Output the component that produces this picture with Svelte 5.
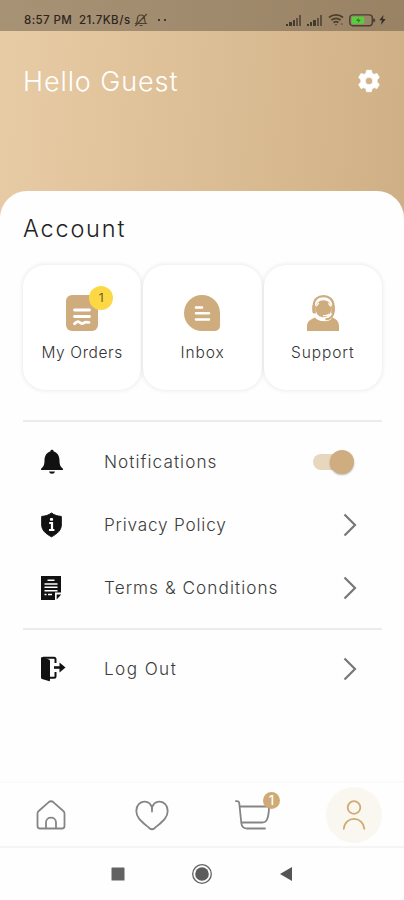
<script>
  let notifications = $state(true);
  const bars = [2, 4, 6, 8, 11];
</script>

<div class="app">
  <header>
    <div class="status">
      <span class="time">8:57 PM</span>
      <span class="speed">21.7KB/s</span>
      <svg class="mute" width="14" height="14" viewBox="0 0 14 14" fill="none" stroke="#4d4030" stroke-width="1.2">
        <path d="M2 10.5h10c-1.3-1-1.4-2.500-1.400-4.500C10.600 3.500 9 2 7 2S3.400 3.500 3.400 6c0 2-.1 3.500-1.400 4.500ZM5.500 12.500h3M12.800 1 1.200 13" />
      </svg>
      <span class="dots"><i></i><i></i></span>
      <span class="grow"></span>
      {#each [0, 1] as n (n)}
        <span class="signal">
          {#each bars as h, i (h)}<i class:dim={i > 2} style="height:{h}px"></i>{/each}
        </span>
      {/each}
      <svg class="wifi" width="16" height="14" viewBox="0 0 16 14" fill="none" stroke="#4a3e30" stroke-width="1.700">
        <path d="M1 4.500C5 .9 11 .9 15 4.500M3.300 7.200c2.700-2.400 6.700-2.400 9.400 0M5.500 9.700c1.500-1.300 3.500-1.300 5 0" />
        <path d="M6.800 11.200h2.400L8 12.700Z" fill="#4a3e30" stroke="none" />
        <path d="M13 11h1.500" stroke-width="1.200" />
      </svg>
      <svg width="27" height="13" viewBox="0 0 27 13">
        <rect x=".8" y=".9" width="22.500" height="10.800" rx="3" fill="none" stroke="#493d31" stroke-width="1.400" />
        <rect x="2.700" y="2.800" width="12.500" height="7" rx="1" fill="#55cf3c" />
        <path d="M24.200 4.200q2 0 2 2.100t-2 2.100Z" fill="#493d31" />
        <path d="M9.700 3.500 7 6.700h2.400l-.6 2.600 3-3.500H9.400Z" fill="#39702c" />
      </svg>
      <svg class="bolt" width="7" height="10" viewBox="0 0 7 10"><path d="M4.500 0 .3 5.300h2.500L2 10l4.700-6H4Z" fill="#3b3025" /></svg>
    </div>
    <div class="hello">
      <h1>Hello Guest</h1>
      <svg width="24" height="24" viewBox="0 0 24 24" fill="#fff" aria-label="Settings">
        <path fill-rule="evenodd" d="M9.600 1.300h4.800l.7 3 1.900 1.100 3-.9 2.300 4-2.200 2.200v2.600l2.200 2.200-2.300 4-3-.9-1.900 1.100-.7 3H9.600l-.7-3L7 18.600l-3 .9-2.300-4 2.200-2.200v-2.600L1.700 8.500l2.300-4 3 .9 1.900-1.100ZM12 8.200a3.800 3.800 0 1 0 0 7.600 3.800 3.800 0 0 0 0-7.600Z" stroke="#fff" stroke-linejoin="round" stroke-width=".8" />
      </svg>
    </div>
  </header>

  <main>
    <h2>Account</h2>
    <div class="cards">
      <button class="card">
        <span class="pic">
          <svg width="32" height="36" viewBox="0 0 32 36">
            <rect width="32" height="36" rx="6" fill="#cfac7e" />
            <path d="M8.500 15h15M8.500 21.500h15M8.500 28.800c2.700-3 4.300-2.500 5.700-1s3 .5 4.300-.2 2.700-.3 4.500-.2" fill="none" stroke="#fff" stroke-width="2.800" stroke-linecap="round" />
          </svg>
          <b class="count">1</b>
        </span>
        <span class="label orders">My Orders</span>
      </button>
      <button class="card">
        <span class="pic">
          <svg width="36" height="36" viewBox="0 0 36 36">
            <path d="M18 0a18 18 0 0 1 18 18v13a5 5 0 0 1-5 5H18a18 18 0 0 1 0-36Z" fill="#cfac7e" />
            <path d="M12 12.500h6M12 18.300h13M12 24.500h13" fill="none" stroke="#fff" stroke-width="2.600" stroke-linecap="round" />
          </svg>
        </span>
        <span class="label inbox">Inbox</span>
      </button>
      <button class="card">
        <span class="pic">
          <svg width="32" height="36" viewBox="0 0 32 36">
            <path d="M0 36v-5c0-4.500 3.500-6.500 8-8.500 3 4.500 16 5.300 17-.3 4.200 1.700 7 4 7 8.800v5Z" fill="#cfac7e" />
            <ellipse cx="16.300" cy="14.500" rx="9.500" ry="11.500" fill="#fff" />
            <path d="M6.700 15v-4C6.700 4.500 11 1.200 16.500 1.200s10 3.300 10 9.800v5c0 5-3.200 8.300-8 8.300" fill="none" stroke="#cfac7e" stroke-width="2.200" />
            <path d="M8.800 13.500c0-5.300 3.200-8.200 7.600-8.200s7.800 2.900 7.800 8.200c0 5.500-3.300 8.700-7.800 8.700s-7.600-3.200-7.600-8.700Z" fill="#cfac7e" />
            <path d="M8.500 11.500c1.500-.8 2.500-2 3.200-3.700M24.500 11.500c-1.500-.8-2.400-1.800-3.100-3.200M16 20.700q4 .3 6.300-1.700" fill="none" stroke="#fff" stroke-width="1.200" />
            <path d="M5.300 10.500h3.500v8H7.200a2 2 0 0 1-1.900-2ZM24.200 10.500h3.500v6a2 2 0 0 1-2 2h-1.500Z" fill="#cfac7e" />
          </svg>
        </span>
        <span class="label support">Support</span>
      </button>
    </div>

    <section>
      <div class="row">
        <svg width="24" height="28" viewBox="0 0 24 28" fill="#111">
          <path d="M10.300 3.600C10.300 1.200 13.700 1.200 13.700 3.600c4.300 1.300 5.700 4.900 5.800 9 .1 4.400.9 6 3.200 7.800.7.600.4 1.600-.5 1.600H1.800c-.9 0-1.200-1-.5-1.600 2.300-1.800 3.100-3.400 3.200-7.800.1-4.100 1.500-7.700 5.800-9ZM9 23.500h6q-.4 2.200-3 2.200t-3-2.200Z" />
        </svg>
        <span class="name notif">Notifications</span>
        <button class="toggle" class:on={notifications} aria-label="Notifications" onclick={() => (notifications = !notifications)}><i></i></button>
      </div>
      <div class="row">
        <svg width="24" height="28" viewBox="0 0 24 28">
          <path d="M11.500 2 C14.500 4.400 18 5.200 21.300 5.400v8.600c0 5-3.800 8.700-9.800 11.800C5.500 22.700 1.700 19 1.700 14V5.400C5 5.200 8.500 4.400 11.500 2Z" fill="#111" stroke="#111" stroke-linejoin="round" />
          <path d="M9.200 12h2.800v7M9 19h5.400" fill="none" stroke="#fff" stroke-width="2.200" />
          <rect x="9.900" y="7" width="3.200" height="2.800" rx="1" fill="#fff" />
        </svg>
        <span class="name privacy">Privacy Policy</span>
        <svg class="chev" width="14" height="24" viewBox="0 0 14 24"><path d="m1.500 1.500 10.500 10.500-10.500 10.500" /></svg>
      </div>
      <div class="row">
        <svg width="24" height="28" viewBox="0 0 24 28">
          <path d="M1 2h20v16.500h-6V26H1Z" fill="#111" />
          <path d="M16.700 20.500h4.500l-4.500 5Z" fill="#111" />
          <path d="M7.500 6.300h7M4.500 10h13M4.500 13.300h13M4.500 16.700h13M4.500 20.500h2M8 20.500h4" fill="none" stroke="#fff" stroke-width="1.500" />
        </svg>
        <span class="name terms">Terms &amp; Conditions</span>
        <svg class="chev" width="14" height="24" viewBox="0 0 14 24"><path d="m1.500 1.500 10.500 10.500-10.500 10.500" /></svg>
      </div>
    </section>
    <section class="last">
      <div class="row">
        <svg class="exit" width="28" height="28" viewBox="0 0 28 28">
          <path d="M1 3.200Q1 2 2.300 2L9 4.500q1 .4 1 1.500V25q0 1.500-1.300 1.100L2 24q-1-.3-1-1.500Z" fill="#111" />
          <path d="M3 2.700h11q1.500 0 1.500 1.500V8M9 22.700h5q1.500 0 1.500-1.500V17" fill="none" stroke="#111" stroke-width="2" />
          <path d="M14 12.500h6" stroke="#111" stroke-width="2.600" />
          <path d="m19.500 7.500 6 5-6 5Z" fill="#111" />
        </svg>
        <span class="name logout">Log Out</span>
        <svg class="chev" width="14" height="24" viewBox="0 0 14 24"><path d="m1.500 1.500 10.500 10.500-10.500 10.500" /></svg>
      </div>
    </section>
  </main>

  <nav>
    <span class="tab">
      <svg width="34" height="34" viewBox="0 0 34 34">
        <path d="M3.500 15.500q0-1.500 1.200-2.500L14.500 4.300q2.500-2 5 0L29.300 13q1.200 1 1.200 2.500V28q0 2.500-2.500 2.500H6Q3.500 30.500 3.500 28ZM12 30v-5.500c0-6.500 10-6.500 10 0V30" />
      </svg>
    </span>
    <span class="tab">
      <svg width="34" height="34" viewBox="0 0 34 34">
        <path d="M17 13.500V12C17 0 1.300 1.200 1.300 13c0 7 5.700 10.800 13.200 17.300q2.500 2 5 0C27 23.800 32.700 20 32.700 13 32.700 1.200 17 0 17 12Z" />
      </svg>
    </span>
    <span class="tab">
      <svg width="38" height="34" viewBox="0 0 38 34">
        <path d="M2 3.200q3-.7 3.300 2.300l2 19.500q.5 5.500 6 5.500H31M6 8.500h29q0 8-1.800 12.500Q32 24.500 28 24.500H8" />
      </svg>
      <b class="badge">1</b>
    </span>
    <span class="tab active">
      <svg width="34" height="34" viewBox="0 0 34 34">
        <circle cx="17" cy="9.500" r="6.300" />
        <path d="M6.800 30.800c1-13.300 19.400-13.300 20.400 0" />
      </svg>
    </span>
  </nav>
  <footer>
    <svg width="14" height="14"><rect x=".5" y=".5" width="13" height="13" rx=".5" fill="#626262" /></svg>
    <svg width="22" height="22" viewBox="0 0 22 22"><circle cx="11" cy="11" r="9.300" fill="none" stroke="#626262" stroke-width="1.300" /><circle cx="11" cy="11" r="6.800" fill="#5c5c5c" /></svg>
    <svg width="14" height="16" viewBox="0 0 14 16"><path d="M13 1v14L1 8Z" fill="#555" /></svg>
  </footer>
</div>

<style>
  :global(body) { background: #fefefe; }
  .app { width: 404px; height: 900px; display: flex; flex-direction: column; overflow: hidden; font-family: Inter, "Liberation Sans", sans-serif; font-weight: 300; color: #222; background: #fefefe; }
  header { height: 223px; flex: none; background: linear-gradient(95deg, #e8cca5 0%, #dfc199 40%, #cfb086 100%); }
  .status { box-sizing: border-box; height: 31px; padding: 9px 18px 0 24px; display: flex; align-items: center; background: rgba(70, 60, 48, .4); font: 500 11.500px Inter, sans-serif; color: #2e261d; }
  .time { width: 55px; white-space: nowrap; letter-spacing: .4px; }
  .speed { width: 54px; white-space: nowrap; letter-spacing: .5px; }
  .mute { margin-left: 1px; }
  .dots { display: flex; gap: 4px; margin-left: 10px; }
  .dots i { width: 2px; height: 2px; background: #43382b; }
  .grow { flex: 1; }
  .signal { height: 12px; display: flex; align-items: flex-end; gap: 1px; margin-right: 6px; }
  .signal i { width: 2.200px; background: #44392d; }
  .signal .dim { opacity: .7; }
  .wifi { margin: 0 5px 0 0; }
  .bolt { margin-left: 3px; }
  .hello { height: 100px; padding: 0 23px 0 23px; display: flex; align-items: center; justify-content: space-between; }
  h1, h2 { margin: 0; font-weight: 300; white-space: nowrap; }
  h1 { font-size: 27px; color: #fff; letter-spacing: .9px; }
  main { position: relative; flex: 1; margin-top: -32px; padding: 0 22px 0 23px; border-radius: 27px 27px 0 0; background: #fefefe; }
  h2 { height: 74px; box-sizing: border-box; padding-top: 23px; line-height: 29px; font-size: 23.500px; letter-spacing: 1.800px; }
  .cards { display: flex; gap: 2px; }
  button { padding: 0; border: 0; font: inherit; color: inherit; }
  .card { flex: 1; height: 125px; border-radius: 22px; background: #fff; box-shadow: 0 0 5px rgba(0, 0, 0, .11); display: flex; flex-direction: column; align-items: center; padding-top: 30px; }
  .pic { position: relative; height: 36px; }
  .pic svg { display: block; }
  .count { position: absolute; left: 23px; top: -9px; width: 24px; height: 24px; border-radius: 50%; background: #fcd944; font-size: 12px; line-height: 24px; font-weight: 400; text-align: center; color: #665a28; }
  .label { margin-top: 12px; height: 20px; line-height: 20px; font-size: 15.500px; color: #333; white-space: nowrap; }
  .orders { letter-spacing: .6px; }
  .inbox, .support { letter-spacing: .9px; }
  section { margin-top: 30px; border-top: 2px solid #ececec; padding-top: 8px; }
  section.last { margin-top: 9px; padding-top: 7px; }
  .row { height: 63px; display: flex; align-items: center; padding: 0 25px 0 17px; }
  .exit { margin-right: -4px; }
  .name { margin-left: 40px; flex: 1; font-size: 17.200px; white-space: nowrap; color: #3c3c3c; }
  .notif { letter-spacing: 1.050px; }
  .privacy { letter-spacing: .8px; }
  .terms { letter-spacing: 1.050px; }
  .logout { letter-spacing: 1.400px; }
  .chev { fill: none; stroke: #777; stroke-width: 2.200; }
  .toggle { position: relative; width: 38px; height: 16px; border-radius: 8px; background: #ddd; margin-right: 6px; }
  .toggle i { position: absolute; left: 0; top: -4px; width: 24px; height: 24px; border-radius: 50%; background: #aaa; box-shadow: 0 1px 2px rgba(0, 0, 0, .3); }
  .toggle.on { background: #e8d7bf; }
  .toggle.on i { left: 17px; background: #d0ad80; }
  nav { height: 67px; flex: none; border-top: 2px solid #fafafa; border-bottom: 2px solid #f5f5f4; display: flex; align-items: center; justify-content: space-between; padding: 0 22px 0 23px; box-sizing: border-box; }
  .tab { position: relative; width: 56px; height: 56px; border-radius: 50%; display: flex; align-items: center; justify-content: center; }
  .tab svg { fill: none; stroke: #858585; stroke-width: 1.800; stroke-linecap: round; stroke-linejoin: round; }
  .tab.active { background: #faf7f0; }
  .tab.active svg { stroke: #d0aa70; }
  .badge { position: absolute; left: 38px; top: 5px; width: 17px; height: 17px; border-radius: 50%; background: #cfaa76; color: #fff; font-size: 13px; font-weight: 500; line-height: 17px; text-align: center; }
  footer { height: 52px; flex: none; display: flex; align-items: center; justify-content: center; gap: 66px; }
</style>
